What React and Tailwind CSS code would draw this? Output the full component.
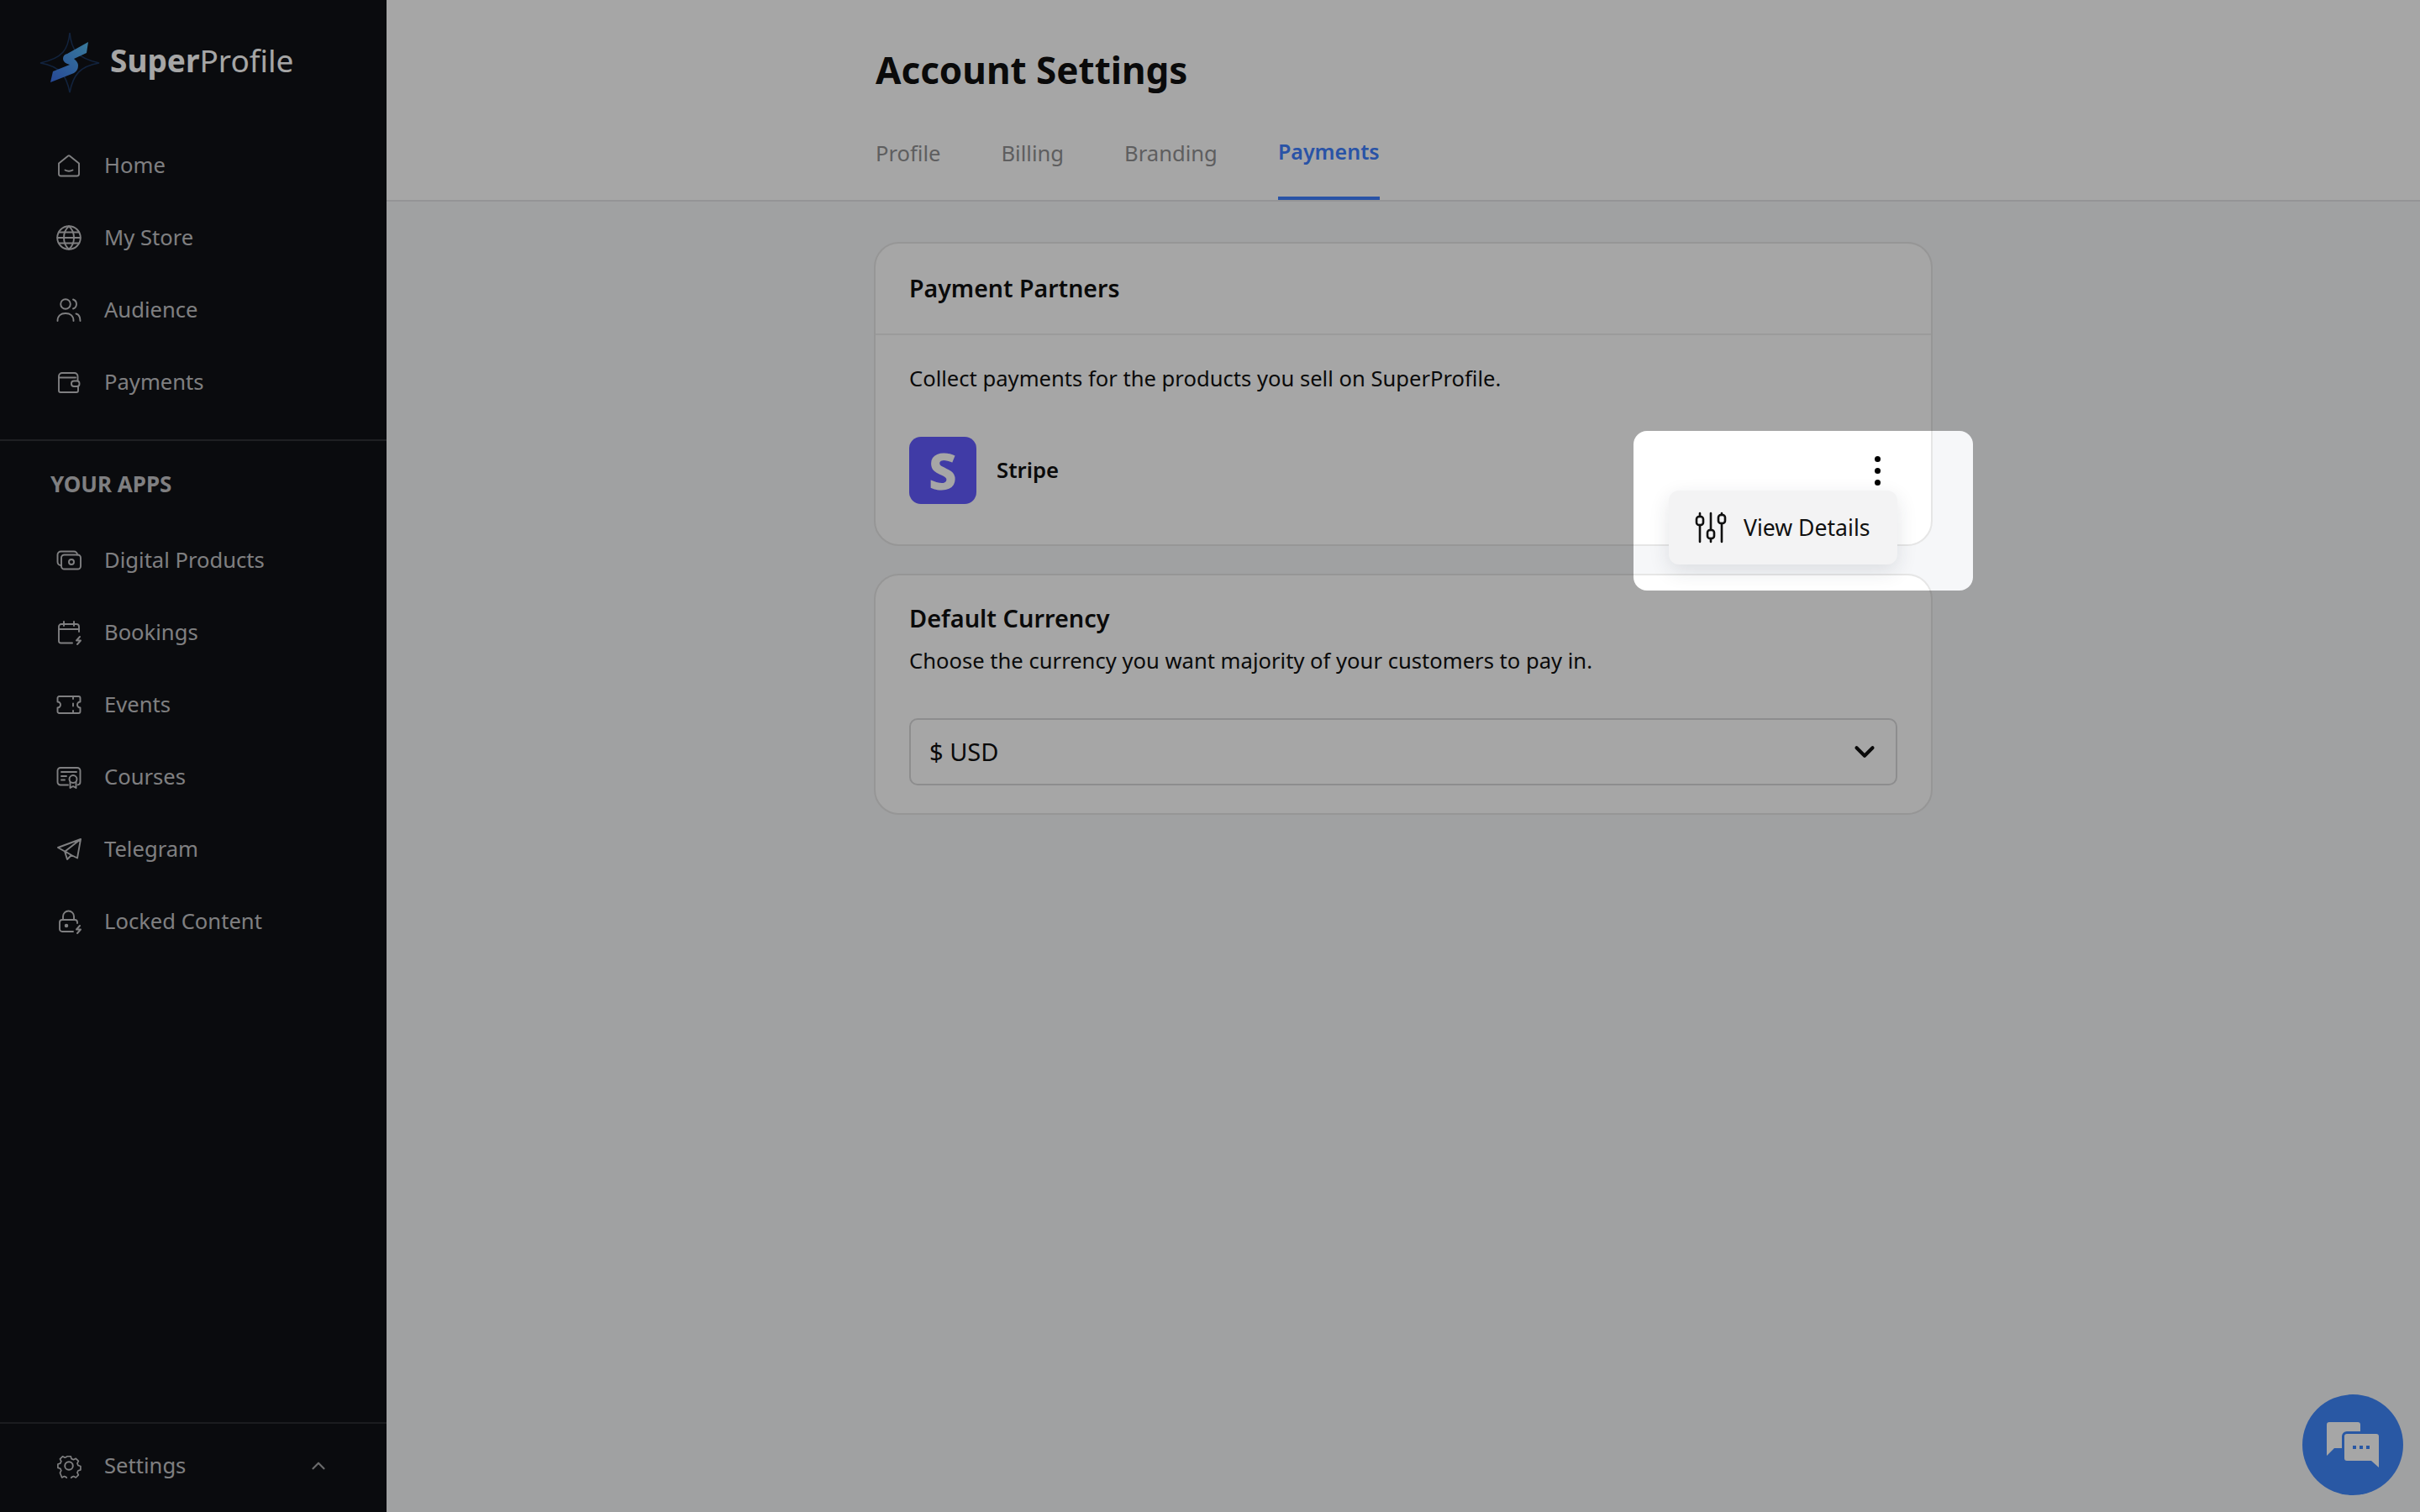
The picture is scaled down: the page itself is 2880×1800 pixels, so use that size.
import React from "react";
import { ChevronDown, ChevronUp } from "lucide-react";

const Ic = ({ children }) => (
  <svg width="30" height="30" viewBox="0 0 30 30" fill="none" stroke="currentColor" strokeWidth="1.9" strokeLinecap="round" strokeLinejoin="round" className="shrink-0">
    {children}
  </svg>
);

const Bolt = ({ x = 0, y = 0 }) => (
  <path transform={`translate(${x} ${y})`} d="M5 0 L1 4.500 H6 L2 9" />
);

const icons = {
  home: <Ic><path d="M3 12.500 14.200 3.500a1.500 1.500 0 0 1 1.600 0L27 12.500V25a2.500 2.500 0 0 1-2.500 2.500h-19A2.500 2.500 0 0 1 3 25Z" /><path d="M10.500 20.500c3 1.600 6 1.600 9 0" /></Ic>,
  globe: <Ic><circle cx="15" cy="15" r="13.800" /><path d="M1.500 15h27M3.300 8.500h23.400M3.300 21.500h23.400" /><path d="M15 1.200c-8 7-8 20.600 0 27.600M15 1.200c8 7 8 20.600 0 27.600" /></Ic>,
  users: <Ic><circle cx="11" cy="8" r="5.800" /><path d="M20 2.500a5.800 5.800 0 0 1 0 11" /><path d="M1.500 28c0-6 4-9 9.500-9s9.500 3 9.500 9" /><path d="M23.500 19.500c3.300.8 5 4 5 8.500" /></Ic>,
  wallet: <Ic><path d="M25.500 13V8a4 4 0 0 0-4-4H7A4 4 0 0 0 3 8v17a2 2 0 0 0 2 2h19a2 2 0 0 0 2-2v-5" /><path d="M3 9.500h20" /><rect x="18" y="13.500" width="9.500" height="6.500" rx="3" /></Ic>,
  digital: <Ic><rect x="6" y="8.500" width="23" height="17" rx="3.500" /><path d="M6 21H5.500A4 4 0 0 1 1.500 17V8.500a4 4 0 0 1 4-4H21a4 4 0 0 1 4 4" /><circle cx="18" cy="17" r="3" /></Ic>,
  bookings: <Ic><path d="M27 14V8a3 3 0 0 0-3-3H6A3 3 0 0 0 3 8v17a2.500 2.500 0 0 0 2.500 2.500H19" /><path d="M3 11h24M9 2v5M21 2v5" /><Bolt x={23} y={20} /></Ic>,
  events: <Ic><path d="M1.500 7A2 2 0 0 1 3.500 5h23a2 2 0 0 1 2 2v4.500a3.500 3.500 0 0 0 0 7V23a2 2 0 0 1-2 2h-23a2 2 0 0 1-2-2v-4.500a3.500 3.500 0 0 0 0-7Z" /><path d="M20 5v3M20 13.500v3M20 22v3" /></Ic>,
  courses: <Ic><path d="M14 24.500H5a3.500 3.500 0 0 1-3.500-3.500V7.500A3.500 3.500 0 0 1 5 4h20a3.500 3.500 0 0 1 3.500 3.500V21a3.500 3.500 0 0 1-3 3.400" /><path d="M6 9h18M6 14h6M6 18.500h4" /><circle cx="20" cy="17.500" r="4.500" /><path d="M16.500 21v7l3.500-2 3.500 2v-7" /></Ic>,
  telegram: <Ic><path d="M29 3 2 13l8 4.500 3 9.500 5-5 7 3.500ZM29 3 10.500 17.500 18 22" /></Ic>,
  lock: <Ic><path d="M20 27H7a3 3 0 0 1-3-3v-8a3 3 0 0 1 3-3h15a3 3 0 0 1 3 3v1" /><path d="M8 13V9a6.500 6.500 0 0 1 13 0v4" /><circle cx="12" cy="20" r="1.300" fill="currentColor" /><Bolt x={23} y={20} /></Ic>,
  gear: <Ic><circle cx="15" cy="15" r="4.800" /><path d="M12.500 2.200h5l1 3.300 2.800 1.200 3.100-1.600 3.500 3.500-1.600 3.100 1.200 2.800 3.300 1v5l-3.300 1-1.200 2.800 1.600 3.100-3.500 3.500-3.100-1.600-2.800 1.200-1 3.300h-5l-1-3.300-2.800-1.200-3.100 1.600L3 24.600l1.600-3.100-1.200-2.800-3.300-1v-5l3.300-1 1.200-2.800L3 5.800l3.500-3.500 3.100 1.600 2-.8Z" transform="translate(1.800 1.800) scale(.88)" /></Ic>,
};

const top = [["Home", "home"], ["My Store", "globe"], ["Audience", "users"], ["Payments", "wallet"]];
const apps = [["Digital Products", "digital"], ["Bookings", "bookings"], ["Events", "events"], ["Courses", "courses"], ["Telegram", "telegram"], ["Locked Content", "lock"]];

const Item = ({ label, icon }) => (
  <div className="flex h-[86px] items-center gap-[27px] pl-[67px] text-[#c4c4c6]">
    {icons[icon]}
    <span className="text-[25.6px] leading-none">{label}</span>
  </div>
);

const Logo = () => (
  <svg width="72" height="74" viewBox="0 0 72 74" fill="none" className="shrink-0">
    <defs>
      <linearGradient id="lg" x1="13" y1="61" x2="58" y2="13" gradientUnits="userSpaceOnUse">
        <stop offset="0" stopColor="#3b6fe8" />
        <stop offset="1" stopColor="#58bdf0" />
      </linearGradient>
    </defs>
    <path d="M36 2C38 22 44 32 71 38 48 42 40 52 36 73 32 52 24 42 1 38 28 32 34 22 36 2Z" stroke="#1c3760" strokeWidth="1.500" />
    <path d="M58 13 56 26 41 33Q46 37 46 41 46 47 41 50L13 61 16 48 36 40Q28 38 28 33 28 28 33 27Z" fill="url(#lg)" />
  </svg>
);

export default function App() {
  return (
    <div className="relative flex h-[1800px] w-[2880px] overflow-hidden bg-[#f6f7f9] font-['Noto_Sans',sans-serif] text-[#101010]">
      <aside className="flex h-full w-[460px] shrink-0 flex-col bg-[#101216]">
        <div className="flex h-[154px] shrink-0 items-start gap-[12px] pl-[47px] pt-[37px]">
          <Logo />
          <div className="pt-[5px] text-[37px] leading-[60px] text-white"><span className="font-bold">Super</span>Profile</div>
        </div>
        {top.map(([l, i]) => <Item key={l} label={l} icon={i} />)}
        <div className="mt-[25px] border-t-2 border-[#303237]" />
        <div className="flex h-[99px] shrink-0 items-center pl-[60px] pt-[3px] text-[26px] font-bold leading-none text-[#c4c4c6]">YOUR APPS</div>
        {apps.map(([l, i]) => <Item key={l} label={l} icon={i} />)}
        <div className="mt-auto flex h-[107px] shrink-0 items-center border-t-2 border-[#2a2c31] pb-[5px] pr-[68px]">
          <div className="flex-1"><Item label="Settings" icon="gear" /></div>
          <ChevronUp size={26} strokeWidth={2} className="text-[#a4a4a6]" />
        </div>
      </aside>

      <main className="flex min-w-0 flex-1 flex-col">
        <header className="h-[240px] shrink-0 border-b-2 border-[#e3e4e6] bg-white">
          <div className="mx-auto flex h-full w-[1260px] flex-col pl-[2px]">
            <h1 className="pt-[52px] text-[44px] font-bold leading-[62px]">Account Settings</h1>
            <div className="mt-auto flex gap-[72px] text-[25.6px] leading-none text-[#919193]">
              <span className="flex h-[68px] items-start">Profile</span>
              <span className="flex h-[68px] items-start">Billing</span>
              <span className="flex h-[68px] items-start">Branding</span>
              <span className="-mt-[2px] flex h-[70px] items-start border-b-4 border-[#4080ff] text-[25px] font-semibold text-[#4080ff]">Payments</span>
            </div>
          </div>
        </header>

        <div className="mx-auto flex w-[1260px] flex-col gap-[33px] pt-[48px]">
          <section className="h-[362px] rounded-[30px] border-2 border-[#e6e6e6] bg-white">
            <div className="flex h-[109px] items-center border-b-2 border-[#eeeeee] px-[40px] text-[28.5px] font-semibold">Payment Partners</div>
            <div className="relative px-[40px]">
              <p className="pt-[32px] text-[25.6px] leading-[40px]">Collect payments for the products you sell on SuperProfile.</p>
              <div className="mt-[49px] flex items-center gap-[24px]">
                <div className="flex h-[80px] w-[80px] items-center justify-center rounded-[14px] bg-[#635bff] text-[60px] font-extrabold leading-none text-white">S</div>
                <span className="text-[25.7px] font-semibold">Stripe</span>
                <div className="ml-auto mr-[20px] flex flex-col gap-[7px]">
                  <i className="h-[7px] w-[7px] rounded-full bg-black" />
                  <i className="h-[7px] w-[7px] rounded-full bg-black" />
                  <i className="h-[7px] w-[7px] rounded-full bg-black" />
                </div>
              </div>
              <div className="absolute right-[40px] top-[185px] z-10 flex h-[88px] w-[272px] items-center gap-[20px] rounded-[12px] bg-[#f3f3f4] pl-[31px] shadow-[0_8px_24px_rgba(30,40,60,0.12)]">
                <svg width="38" height="38" viewBox="0 0 38 38" fill="none" stroke="#101010" strokeWidth="2.600" strokeLinecap="round">
                  <path d="M6 2v4M6 16v20M19 2v20M19 32v4M32 2v2M32 14v22" />
                  <rect x="2" y="6" width="8" height="10" rx="3" />
                  <rect x="15" y="22" width="8" height="10" rx="3" />
                  <rect x="28" y="4" width="8" height="10" rx="3" />
                </svg>
                <span className="text-[26.6px] leading-none">View Details</span>
              </div>
            </div>
          </section>

          <section className="h-[287px] rounded-[30px] border-2 border-[#e6e6e6] bg-white px-[40px]">
            <h2 className="pt-[29px] text-[28.9px] font-semibold leading-[44px]">Default Currency</h2>
            <p className="pt-[9px] text-[25.6px] leading-[40px]">Choose the currency you want majority of your customers to pay in.</p>
            <div className="mt-[48px] flex h-[80px] items-center justify-between rounded-[10px] border-2 border-[#d9d9da] pl-[22px] pr-[18px] text-[29px]">
              <span>$ USD</span>
              <ChevronDown size={38} strokeWidth={2.600} color="#101010" />
            </div>
          </section>
        </div>
      </main>

      <div className="absolute bottom-[20px] right-[20px] flex h-[120px] w-[120px] items-center justify-center rounded-full bg-[#3f87fc]">
        <svg width="62" height="54" viewBox="0 0 62 54" fill="#ffffff">
          <path d="M3 0h34a3 3 0 0 1 3 3v8H24a6 6 0 0 0-6 6v14H9l-9 9V3a3 3 0 0 1 3-3Z" />
          <path d="M24 14h35a3 3 0 0 1 3 3v37l-9-8H24a3 3 0 0 1-3-3V17a3 3 0 0 1 3-3Z" />
          <path d="M31 28h4v4h-4zM39 28h4v4h-4zM47 28h4v4h-4z" fill="#3f87fc" />
        </svg>
      </div>

      <div className="pointer-events-none absolute left-[1944px] top-[513px] z-20 h-[190px] w-[404px] rounded-[16px] shadow-[0_0_0_4000px_rgba(0,0,0,0.35)]" />
    </div>
  );
}
